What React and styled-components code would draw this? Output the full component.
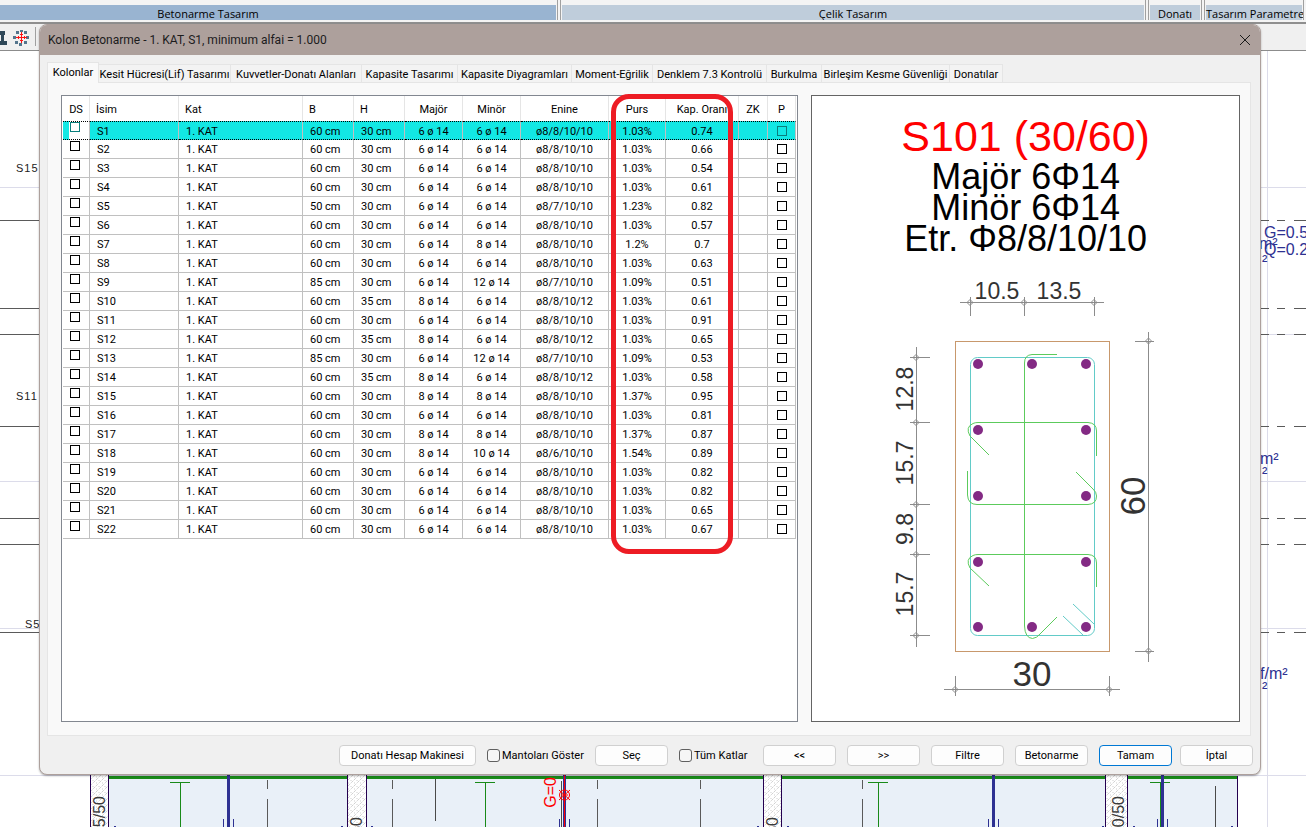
import React, { useState } from 'react';
import styled, { createGlobalStyle } from 'styled-components';

const tabs = [
    { name: 'Kolonlar', width: 52 },
    { name: 'Kesit Hücresi(Lif) Tasarımı', width: 132 },
    { name: 'Kuvvetler-Donatı Alanları', width: 131 },
    { name: 'Kapasite Tasarımı', width: 96 },
    { name: 'Kapasite Diyagramları', width: 114 },
    { name: 'Moment-Eğrilik', width: 81 },
    { name: 'Denklem 7.3 Kontrolü', width: 114 },
    { name: 'Burkulma', width: 55 },
    { name: 'Birleşim Kesme Güvenliği', width: 128 },
    { name: 'Donatılar', width: 53 },
];

const columns = [
    { name: 'DS', width: 27, align: 'center' },
    { name: 'İsim', width: 89 },
    { name: 'Kat', width: 124 },
    { name: 'B', width: 51 },
    { name: 'H', width: 51 },
    { name: 'Majör', width: 58, align: 'center' },
    { name: 'Minör', width: 58, align: 'center' },
    { name: 'Enine', width: 88, align: 'center' },
    { name: 'Purs', width: 57, align: 'center' },
    { name: 'Kap. Oranı', width: 73, align: 'center' },
    { name: 'ZK', width: 29, align: 'center' },
    { name: 'P', width: 28, align: 'center' },
];

// isim, B, H, majör, minör, enine, purs, kapasite oranı
const rows = [
    ['S1', 60, 30, 6, 6, '8/8/10/10', '1.03%', '0.74'],
    ['S2', 60, 30, 6, 6, '8/8/10/10', '1.03%', '0.66'],
    ['S3', 60, 30, 6, 6, '8/8/10/10', '1.03%', '0.54'],
    ['S4', 60, 30, 6, 6, '8/8/10/10', '1.03%', '0.61'],
    ['S5', 50, 30, 6, 6, '8/7/10/10', '1.23%', '0.82'],
    ['S6', 60, 30, 6, 6, '8/8/10/10', '1.03%', '0.57'],
    ['S7', 60, 30, 6, 8, '8/8/10/10', '1.2%', '0.7'],
    ['S8', 60, 30, 6, 6, '8/8/10/10', '1.03%', '0.63'],
    ['S9', 85, 30, 6, 12, '8/7/10/10', '1.09%', '0.51'],
    ['S10', 60, 35, 8, 6, '8/8/10/12', '1.03%', '0.61'],
    ['S11', 60, 30, 6, 6, '8/8/10/10', '1.03%', '0.91'],
    ['S12', 60, 35, 8, 6, '8/8/10/12', '1.03%', '0.65'],
    ['S13', 85, 30, 6, 12, '8/7/10/10', '1.09%', '0.53'],
    ['S14', 60, 35, 8, 6, '8/8/10/12', '1.03%', '0.58'],
    ['S15', 60, 30, 8, 8, '8/8/10/10', '1.37%', '0.95'],
    ['S16', 60, 30, 6, 6, '8/8/10/10', '1.03%', '0.81'],
    ['S17', 60, 30, 8, 8, '8/8/10/10', '1.37%', '0.87'],
    ['S18', 60, 30, 8, 10, '8/6/10/10', '1.54%', '0.89'],
    ['S19', 60, 30, 6, 6, '8/8/10/10', '1.03%', '0.82'],
    ['S20', 60, 30, 6, 6, '8/8/10/10', '1.03%', '0.82'],
    ['S21', 60, 30, 6, 6, '8/8/10/10', '1.03%', '0.65'],
    ['S22', 60, 30, 6, 6, '8/8/10/10', '1.03%', '0.67'],
];

function PlanDrawing() {
    const solid = [220, 308, 334, 426, 518, 544, 632];
    const axis = [187, 481, 628, 775];

    return (
        <Plan aria-hidden='true'>
            <defs>
                <pattern id='hatch' width='6' height='6' patternUnits='userSpaceOnUse'>
                    <rect width='6' height='6' fill='#fff' />
                    <path d='M0 6L6 0M-1 1L1 -1M5 7L7 5' stroke='#bdbdbd' strokeDasharray='1 1' />
                    <path d='M3 0v1M0 3h1' stroke='#cfcfcf' />
                </pattern>
            </defs>
            {/* aks çizgileri */}
            <g stroke='#dcdcea' shapeRendering='crispEdges'>
                {axis.map((y) => <path key={y} d={`M0 ${y + 0.5}H2600`} />)}
                <path d='M1267.5 51V2000' />
                <path d='M1260 334.5H1306' />
            </g>
            <g stroke='#5a5a5a' shapeRendering='crispEdges'>
                {solid.map((y) => (
                    <g key={y}>
                        <path d={`M0 ${y + 0.5}H40`} />
                        <path d={`M1261 ${y + 0.5}h8m8 0h8m9 0h20`} />
                    </g>
                ))}
            </g>
            <g fontSize='11' fill='#222' letterSpacing='1'>
                <text x='16' y='172'>S15</text>
                <text x='16' y='400'>S11</text>
                <text x='25' y='628'>S5</text>
            </g>
            <g fontSize='16' fill='#2e3192'>
                <text x='1264' y='238'>G=0.5</text>
                <text x='1264' y='255'>Q=0.2</text>
                <text x='1259' y='249'>m²</text>
                <text x='1262' y='266'>²</text>
                <text x='1260' y='464'>m²</text>
                <text x='1262' y='478'>²</text>
                <text x='1260' y='679'>f/m²</text>
                <text x='1262' y='693'>²</text>
            </g>

            {/* döşeme ve kirişler */}
            <g shapeRendering='crispEdges'>
                <rect x='109' y='776' width='1129' height='400' fill='#e9f0f8' />
                <rect x='109' y='776' width='1129' height='3' fill='#198a19' />
                <path d='M1237.5 776V1100' stroke='#240050' />
                {[180, 485, 878, 1160].map((x) => (
                    <path key={x} d={`M${x - 10} 782.5h20M${x + 0.5} 782V1100`} stroke='#198a19' fill='none' />
                ))}
                {[228, 564, 993, 1162].map((x) => (
                    <g key={x} stroke='#2e3192'>
                        <path d={`M${x + 0.5} 775V1100`} strokeWidth='3' />
                        <path d={`M${x - 4.5} 819V1100M${x + 5.5} 819V1100`} />
                    </g>
                ))}
                <path d='M564.5 775V1100' stroke='#f00' />
                {[267, 392, 597, 700, 862].map((x) => (
                    <path key={x} d={`M${x + 0.5} 780v9m0 10V1100`} stroke='#5a5a5a' />
                ))}
                <path d='M435.5 779V821M561.5 781V1100M1215.5 786V1100' stroke='#4a4a4a' />
                {[[90, 19], [347, 20], [763, 19], [1105, 23]].map(([x, w]) => (
                    <rect key={x} x={x + 0.5} y='770' width={w - 1} height='400' fill='url(#hatch)' stroke='#240050' />
                ))}
                {[114, 341, 371, 757, 787, 1102, 1133, 1231].map((x) => (
                    <rect key={x} x={x} y='826' width='2' height='2' fill='#2e3192' />
                ))}
            </g>
            <g fill='none' stroke='#f00'>
                <circle cx='564.5' cy='795' r='5' />
                <path d='M559 790l11 10M570 790l-11 10M561 795h7' />
            </g>
            <g fontSize='16' fill='#3a3a3a' textAnchor='end'>
                <text transform='translate(105 796) rotate(-90)'>25/50</text>
                <text transform='translate(362 817) rotate(-90)'>25/50</text>
                <text transform='translate(778 817) rotate(-90)'>25/50</text>
                <text transform='translate(1124 796) rotate(-90)'>30/50</text>
                <text transform='translate(556 777) rotate(-90)' fill='#f00'>G=0</text>
            </g>
        </Plan>
    );
}

// ölçü çizgisi ucundaki işaret
function Tick({ x, y }) {
    return <path d={`M${x - 3} ${y}L${x} ${y - 3}L${x + 3} ${y}L${x} ${y + 3}Z`} strokeWidth='1' />;
}

function SectionDrawing() {
    const bars = [
        [978, 364], [1032, 364], [1086, 364],
        [978, 430], [1086, 430],
        [978, 496], [1086, 496],
        [978, 562], [1086, 562],
        [978, 627], [1032, 627], [1086, 627],
    ];

    return (
        <Section viewBox='875 270 301 430' role='img' aria-label='Kolon kesiti'>
            <rect x='955.5' y='341.5' width='154' height='310' fill='none' stroke='#c8986c' shapeRendering='crispEdges' />
            <g fill='none' stroke='#62cbc8'>
                <rect x='970.5' y='357.5' width='124' height='278' rx='7' />
                <path d='M1073 604L1094 624M1063 616L1083 635' />
            </g>
            <g fill='none' stroke='#5ccb5c'>
                <path d='M1057 354.5H1032Q1024.5 355 1024.5 363V626Q1025 638 1032.5 638.5Q1037 638 1040 634L1057 617' />
                <path d='M989 455L970 436Q965 427 973 423.5Q975 422.5 978 422.5H1088Q1096.5 423 1096.5 431V456' />
                <path d='M967.5 471V495Q968 504.5 977 504.5H1088Q1096.5 504 1096.5 496Q1096.5 492 1093 489L1076 472' />
                <path d='M989 586L970 568Q965 559 973 555.5Q975 554.5 978 554.5H1088Q1096.5 555 1096.5 563V587' />
            </g>
            {bars.map(([x, y]) => <circle key={`${x}-${y}`} cx={x} cy={y} r='5' fill='#832a84' />)}

            <g fill='none' stroke='#8c8c8c'>
                <path d='M960 302.5H1104M970.5 297V316M1024.5 297V316M1094.5 297V316' />
                <path d='M916.5 347V647M910 357.5H930M910 422.5H930M910 504.5H930M910 554.5H930M910 635.5H930' />
                <path d='M1148.5 332V662M1135 341.5H1154M1135 651.5H1154' />
                <path d='M944 689.5H1120M955.5 676V696M1109.5 676V696' />
                {[970, 1024, 1094].map((x) => <Tick key={x} x={x} y={302.5} />)}
                {[357, 422, 504, 554, 635].map((y) => <Tick key={y} x={916} y={y + 0.5} />)}
                <Tick x={1148.5} y={341} />
                <Tick x={1148.5} y={651} />
                <Tick x={955} y={689.5} />
                <Tick x={1109} y={689.5} />
            </g>

            <g fill='#333' fontSize='23' textAnchor='middle'>
                <text x='997' y='299'>10.5</text>
                <text x='1059' y='299'>13.5</text>
                <text transform='translate(913 389) rotate(-90)'>12.8</text>
                <text transform='translate(913 463) rotate(-90)'>15.7</text>
                <text transform='translate(913 529) rotate(-90)'>9.8</text>
                <text transform='translate(913 594) rotate(-90)'>15.7</text>
            </g>
            <g fill='#333' fontSize='35' textAnchor='middle'>
                <text x='1032' y='686'>30</text>
                <text transform='translate(1145 496) rotate(-90)'>60</text>
            </g>
        </Section>
    );
}

function ColumnTable() {
    const [selected, setSelected] = useState('S1');

    return (
        <Table>
            <colgroup>
                {columns.map((col) => <col key={col.name} style={{ width: col.width }} />)}
            </colgroup>
            <thead>
                <tr>
                    {columns.map((col) => <HeadCell key={col.name} $align={col.align}>{col.name}</HeadCell>)}
                </tr>
            </thead>
            <tbody>
                {rows.map(([name, b, h, major, minor, enine, purs, oran]) => (
                    <Row key={name} $selected={name === selected} onClick={() => setSelected(name)}>
                        <CheckCell $top>
                            <GridCheck type='checkbox' aria-label={`${name} DS`} />
                        </CheckCell>
                        <Cell>{name}</Cell>
                        <Cell>1. KAT</Cell>
                        <Cell>{b} cm</Cell>
                        <Cell>{h} cm</Cell>
                        <Cell $align='center'>{major} ø 14</Cell>
                        <Cell $align='center'>{minor} ø 14</Cell>
                        <Cell $align='center'>ø{enine}</Cell>
                        <Cell $align='center'>{purs}</Cell>
                        <Cell $align='center'>{oran}</Cell>
                        <Cell />
                        <CheckCell>
                            <GridCheck type='checkbox' aria-label={`${name} P`} />
                        </CheckCell>
                    </Row>
                ))}
            </tbody>
        </Table>
    );
}

function App() {
    const [tab, setTab] = useState('Kolonlar');

    return (
        <Page>
            <GlobalStyle />
            <Ribbon>
                <RibbonGroup $first><RibbonLabel $active $shift>Betonarme Tasarım</RibbonLabel></RibbonGroup>
                <RibbonGroup><RibbonLabel>Çelik Tasarım</RibbonLabel></RibbonGroup>
                <RibbonGroup><RibbonLabel>Donatı</RibbonLabel></RibbonGroup>
                <RibbonGroup><RibbonLabel $start>Tasarım Parametreleri</RibbonLabel></RibbonGroup>
            </Ribbon>
            <Toolbar>
                <svg width='36' height='26' viewBox='0 24 36 26' aria-hidden='true'>
                    <path d='M0 31h5v4H4v6h3v4H0v-4h1v-6H0z' fill='#2f4858' />
                    <g fill='#54758c'>
                        <path d='M16 31h3v3h-3zM20 30h3v2h-3zM24 31h3v3h-3zM13 36h3v3h-3zM26 36h3v3h-3zM15 41h3v3h-3zM19 43h3v3h-3zM24 41h3v3h-3z' />
                    </g>
                    <path d='M21.5 32v11M16 37.5h11M18.5 36v3M24.5 36v3M20 34.5h3M20 40.5h3' stroke='#f11' fill='none' />
                    <path d='M35.5 27v19' stroke='#a0a0a0' />
                </svg>
            </Toolbar>
            <PlanDrawing />

            <Dialog role='dialog' aria-labelledby='dialogTitle'>
                <TitleBar>
                    <h1 id='dialogTitle'>Kolon Betonarme - 1. KAT, S1, minimum alfai = 1.000</h1>
                    <CloseButton aria-label='Kapat'>
                        <svg width='10' height='10' viewBox='0 0 10 10'>
                            <path d='M0 0L10 10M10 0L0 10' stroke='#1a1a1a' />
                        </svg>
                    </CloseButton>
                </TitleBar>

                <TabList role='tablist'>
                    {tabs.map((item) => (
                        <Tab
                            key={item.name}
                            role='tab'
                            aria-selected={item.name === tab}
                            $active={item.name === tab}
                            $width={item.width}
                            onClick={() => setTab(item.name)}
                        >
                            {item.name}
                        </Tab>
                    ))}
                </TabList>

                <TabPanel role='tabpanel'>
                    <TableBox>
                        <ColumnTable />
                        <Highlight />
                    </TableBox>
                    <DrawingBox>
                        <SectionTitle>S101 (30/60)</SectionTitle>
                        <SectionNote>Majör 6Φ14</SectionNote>
                        <SectionNote>Minör 6Φ14</SectionNote>
                        <SectionNote>Etr. Φ8/8/10/10</SectionNote>
                        <SectionDrawing />
                    </DrawingBox>
                </TabPanel>

                <Footer>
                    <FooterGroup>
                        <Button $wide>Donatı Hesap Makinesi</Button>
                        <CheckLabel $width={97}><input type='checkbox' />Mantoları Göster</CheckLabel>
                        <Button>Seç</Button>
                        <CheckLabel $width={73}><input type='checkbox' />Tüm Katlar</CheckLabel>
                        <Button>&lt;&lt;</Button>
                        <Button>&gt;&gt;</Button>
                        <Button>Filtre</Button>
                        <Button>Betonarme</Button>
                        <Button $primary>Tamam</Button>
                    </FooterGroup>
                    <Button>İptal</Button>
                </Footer>
            </Dialog>
        </Page>
    );
}

const GlobalStyle = createGlobalStyle`
    *{
        box-sizing: border-box;
    }
    body{
        margin: 0;
        background: #ffffff;
    }
    button, input{
        font: inherit;
        color: inherit;
        margin: 0;
    }
`

const Page = styled.div`
    position: relative;
    display: flex;
    flex-direction: column;
    height: 100vh;
    min-height: 780px;
    overflow: hidden;
    font-family: Roboto, Tahoma, sans-serif;
    font-size: 11px;
    color: #000000;
`

const Ribbon = styled.div`
    display: grid;
    grid-template-columns: 560fr 588fr 56px 102px;
    height: 24px;
    background: #f4f4f4;
    border-bottom: 2px solid #8f8f8f;
`

const RibbonGroup = styled.div`
    height: 20px;
    padding: 5px 1px 0 ${(props) => (props.$first ? '0' : '1px')};
    margin-right: 2px;
    border-left: ${(props) => (props.$first ? 'none' : '1px solid #a0a0a0')};
    border-right: 1px solid #a0a0a0;
    overflow: hidden;
`

const RibbonLabel = styled.div`
    height: 15px;
    line-height: 17px;
    text-align: ${(props) => (props.$start ? 'left' : 'center')};
    padding-right: ${(props) => (props.$shift ? '140px' : '0')};
    background: ${(props) => (props.$active ? '#99b4d1' : '#bfcddb')};
    font-family: "Open Sans", "Segoe UI", sans-serif;
    white-space: nowrap;
`

const Toolbar = styled.div`
    height: 27px;
    background: #f0f0f0;
    border-bottom: 1px solid #8c8c8c;
`

const Plan = styled.svg`
    position: absolute;
    top: 0;
    left: 0;
    width: 100%;
    height: 100%;
    font-family: "Liberation Sans", Arial, sans-serif;
`

const Dialog = styled.div`
    position: absolute;
    top: 24px;
    right: 45px;
    bottom: 52px;
    left: 39px;
    display: flex;
    flex-direction: column;
    background: #f0f0f0;
    border: 1px solid #ada09c;
    border-radius: 8px;
    overflow: hidden;
    box-shadow: 0 1px 2px rgba(0, 0, 0, 0.3);
`

const TitleBar = styled.div`
    display: flex;
    align-items: center;
    justify-content: space-between;
    height: 30px;
    flex-shrink: 0;
    padding: 0 8px;
    background: #ada09c;
    h1{
        margin: 0;
        font-size: 12px;
        font-weight: 400;
        color: #1c1c1c;
    }
`

const CloseButton = styled.button`
    display: flex;
    align-items: center;
    justify-content: center;
    width: 14px;
    height: 14px;
    padding: 0;
    border: none;
    background: transparent;
`

const TabList = styled.div`
    display: flex;
    align-items: flex-end;
    height: 28px;
    flex-shrink: 0;
    padding: 0 7px;
`

const Tab = styled.button`
    position: relative;
    z-index: 1;
    width: ${(props) => props.$width}px;
    height: ${(props) => (props.$active ? '21px' : '19px')};
    padding: 0;
    border: 1px solid #e5e5e5;
    border-bottom: ${(props) => (props.$active ? 'none' : '1px solid #e5e5e5')};
    border-left-width: ${(props) => (props.$active ? '1px' : '0')};
    background: ${(props) => (props.$active ? '#f9f9f9' : '#f3f3f3')};
    line-height: 19px;
    white-space: nowrap;
    display: flex;
    justify-content: center;
`

const TabPanel = styled.div`
    display: flex;
    gap: 13px;
    flex: 1;
    min-height: 0;
    margin: -1px 9px 0 7px;
    padding: 12px 10px 13px 13px;
    background: #f9f9f9;
    border: 1px solid #e5e5e5;
`

const TableBox = styled.div`
    position: relative;
    flex: 737 0 0;
    padding: 0 1px;
    background: #ffffff;
    border: 1px solid #828790;
`

const DrawingBox = styled.div`
    display: flex;
    flex-direction: column;
    align-items: center;
    flex: 429 0 0;
    padding-top: 16px;
    background: #ffffff;
    border: 1px solid #646464;
    font-family: "Liberation Sans", Arial, sans-serif;
    overflow: hidden;
`

const SectionTitle = styled.h2`
    margin: 0;
    font-size: 43px;
    font-weight: 400;
    line-height: 49px;
    color: #ff0000;
`

const SectionNote = styled.p`
    margin: 0;
    font-size: 36px;
    line-height: 31px;
`

const Section = styled.svg`
    width: 301px;
    height: 430px;
    flex-shrink: 0;
    margin-top: 16px;
`

const Table = styled.table`
    width: 733px;
    table-layout: fixed;
    border-collapse: separate;
    border-spacing: 0;
`

const HeadCell = styled.th`
    height: 25px;
    padding: ${(props) => (props.$align ? '2px 0 0' : '2px 0 0 6px')};
    text-align: ${(props) => props.$align || 'left'};
    font-weight: 400;
    border-right: 1px solid #e5e5e5;
    white-space: nowrap;
`

const Cell = styled.td`
    height: 19px;
    padding: ${(props) => (props.$align ? '2px 0 0' : '2px 0 0 7px')};
    text-align: ${(props) => props.$align || 'left'};
    line-height: 16px;
    border-right: 1px solid #c0c0c0;
    border-bottom: 1px solid #c0c0c0;
    white-space: nowrap;
`

const CheckCell = styled(Cell)`
    padding: ${(props) => (props.$top ? '1px 0 0 7px' : '4px 0 0 9px')};
    vertical-align: top;
`

const GridCheck = styled.input`
    appearance: none;
    display: block;
    width: 10px;
    height: 10px;
    border: 1px solid #000000;
    background: transparent;
    &:checked{
        background: #000000;
    }
`

const Row = styled.tr`
    td{
        background: ${(props) => (props.$selected ? '#12e8e4' : '#ffffff')};
        ${(props) => props.$selected && `
            border-bottom: 1px dotted #000000;
            border-top: 1px dotted #000000;
            line-height: 15px;
        `}
    }
    td:first-child{
        ${(props) => props.$selected && `
            background: linear-gradient(to right, #12e8e4 6px, #ffffff 6px);
            padding-top: 0;
        `}
    }
    input{
        ${(props) => props.$selected && 'border-color: #0a7f7d;'}
    }
`

// kontrol edilen sütunların etrafındaki işaret
const Highlight = styled.div`
    position: absolute;
    top: -2px;
    left: 549px;
    width: 122px;
    height: 460px;
    border: 5px solid #ed1c24;
    border-radius: 18px;
    pointer-events: none;
`

const Footer = styled.div`
    display: flex;
    align-items: flex-start;
    justify-content: flex-end;
    gap: 8px;
    height: 38px;
    flex-shrink: 0;
    padding: 9px 7px 0;
`

const FooterGroup = styled.div`
    display: flex;
    align-items: center;
    gap: 11px;
`

const Button = styled.button`
    width: ${(props) => (props.$wide ? '137px' : '73px')};
    height: 21px;
    padding: 0;
    border: 1px solid ${(props) => (props.$primary ? '#0078d4' : '#d0d0d0')};
    border-radius: 4px;
    background: #fdfdfd;
    line-height: 19px;
    white-space: nowrap;
`

const CheckLabel = styled.label`
    display: flex;
    align-items: center;
    gap: 2px;
    width: ${(props) => props.$width}px;
    white-space: nowrap;
    input{
        appearance: none;
        width: 13px;
        height: 13px;
        flex-shrink: 0;
        border: 1px solid #606060;
        border-radius: 3px;
        background: #f6f6f6;
    }
    input:checked{
        background: #0078d4;
    }
`

export default App;
